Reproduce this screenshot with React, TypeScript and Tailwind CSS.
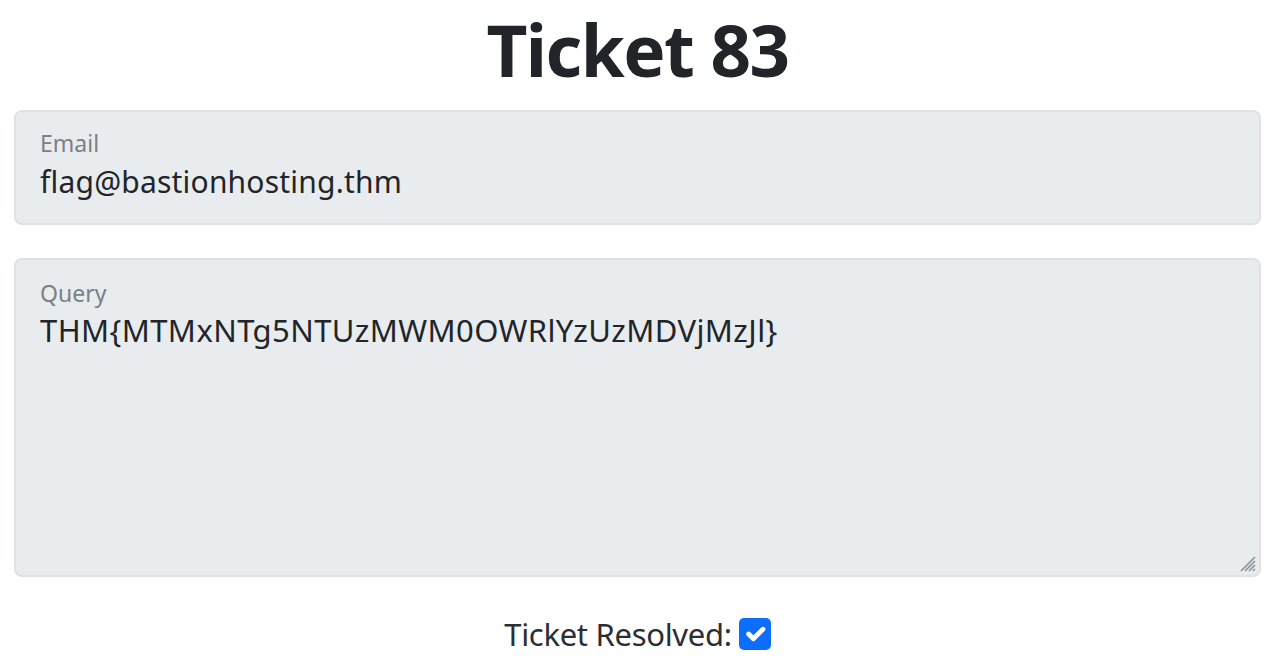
import React from 'react';

const font = "font-['Noto_Sans',sans-serif]";

function ResizeGrip() {
  return (
    <svg className="absolute bottom-[3px] right-[3px] h-[20px] w-[20px]" viewBox="0 0 20 20" aria-hidden>
      <g stroke="#8a8f94" strokeWidth="1.6">
        <line x1="19" y1="5" x2="5" y2="19" />
        <line x1="19" y1="9" x2="9" y2="19" />
        <line x1="19" y1="13" x2="13" y2="19" />
        <line x1="19" y1="17" x2="17" y2="19" />
      </g>
    </svg>
  );
}

export default function App() {
  return (
    <div className={`min-h-[666px] w-[1275px] bg-white text-[#212529] ${font}`}>
      <h1 className="pt-[8px] text-center text-[71px] font-bold leading-[84px] tracking-[-1.5px]">Ticket 83</h1>

      <div className="mx-[14px] mt-[18px]">
        <div className="h-[115px] rounded-[8px] border-2 border-[#dee2e6] bg-[#e9ecef] px-[24px] pt-[16px]">
          <div className="text-[23px] leading-[30px] text-[#7b8086]">Email</div>
          <div className="mt-[6px] text-[30px] leading-[36px] tracking-[0.2px]">flag@bastionhosting.thm</div>
        </div>

        <div className="relative mt-[33px] h-[319px] rounded-[8px] border-2 border-[#dee2e6] bg-[#e9ecef] px-[24px] pt-[18px]">
          <div className="text-[23px] leading-[30px] text-[#7b8086]">Query</div>
          <div className="mt-[3px] whitespace-nowrap text-[31px] leading-[38px] tracking-[0.4px]">
            THM{'{'}MTMxNTg5NTUzMWM0OWRlYzUzMDVjMzJl{'}'}
          </div>
          <ResizeGrip />
        </div>
      </div>

      <div className="mt-[39px] flex items-center justify-center gap-[7px]">
        <span className="text-[31px] leading-[36px] tracking-[-0.3px] text-[#2b2f33]">Ticket Resolved:</span>
        <span className="h-[32px] w-[32px] rounded-[5px] bg-[#0d6efd]">
          <svg viewBox="0 0 20 20" className="h-[32px] w-[32px]" aria-hidden>
            <path d="m6 10 3 3 6-6" fill="none" stroke="#fff" strokeWidth="3" strokeLinecap="round" strokeLinejoin="round" />
          </svg>
        </span>
      </div>
    </div>
  );
}
